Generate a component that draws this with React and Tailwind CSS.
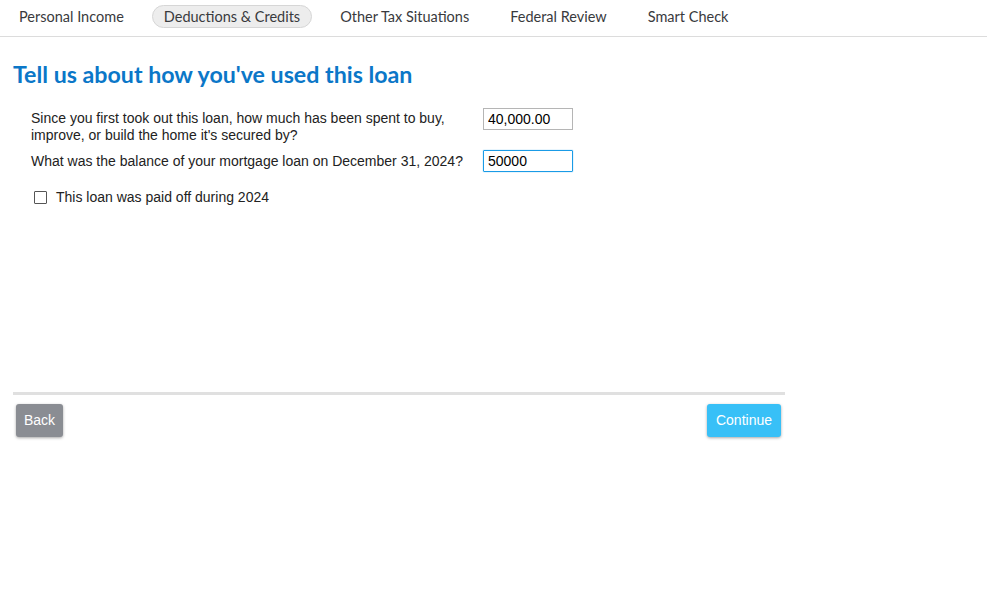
import { useState } from 'react';

const tabs = ['Personal Income', 'Deductions & Credits', 'Other Tax Situations', 'Federal Review', 'Smart Check'];

const App = () => {
  const [spent, setSpent] = useState('40,000.00');
  const [balance, setBalance] = useState('50000');
  const [paidOff, setPaidOff] = useState(false);

  return (
    <div className="w-[987px] h-[614px] bg-white" style={{ fontFamily: '"Liberation Sans", Arial, sans-serif' }}>
      {/* Top nav */}
      <div className="h-[37px] border-b border-[#dcdcdc] flex items-center gap-[15px] pl-[6px] pb-[3px] text-[14.5px] text-[#393a3d]" style={{ fontFamily: 'Lato, "Noto Sans", sans-serif' }}>
        {tabs.map((tab, i) => (
          <span
            key={tab}
            className={
              i === 1
                ? 'h-[23px] px-[11px] flex items-center rounded-full bg-[#ededed] border border-[#d6d6d6]'
                : 'px-[13px] flex items-center'
            }
          >
            {tab}
          </span>
        ))}
      </div>

      <div className="w-[772px] ml-[13px]">
        <h1 className="mt-[23px] text-[23.2px] leading-[29px] font-bold text-[#0b77c8]" style={{ fontFamily: 'Lato, "Noto Sans", sans-serif' }}>
          Tell us about how you've used this loan
        </h1>

        {/* Questions */}
        <div className="mt-[19px] pl-[18px] text-[14px] text-[#222] leading-[17px]">
          <div className="flex items-start">
            <p className="w-[452px] pt-[2px]">
              Since you first took out this loan, how much has been spent to buy, improve, or build the home it's secured by?
            </p>
            <input
              value={spent}
              onChange={(e) => setSpent(e.target.value)}
              className="w-[90px] h-[22px] border border-[#b5b5b5] px-[4px] text-[14px] text-black outline-none"
            />
          </div>
          <div className="flex items-center mt-[6px]">
            <p className="w-[452px]">What was the balance of your mortgage loan on December 31, 2024?</p>
            <input
              value={balance}
              onChange={(e) => setBalance(e.target.value)}
              className="w-[90px] h-[22px] border border-[#1a9be6] rounded-[1px] px-[4px] text-[14px] text-black outline-none shadow-[0_0_1px_#1a9be6]"
            />
          </div>

          <label className="flex items-center gap-[9px] mt-[17px] ml-[3px] cursor-pointer">
            <input
              type="checkbox"
              checked={paidOff}
              onChange={(e) => setPaidOff(e.target.checked)}
              className="w-[13px] h-[13px] appearance-none border border-[#555] bg-white rounded-[1px]"
            />
            <span>This loan was paid off during 2024</span>
          </label>
        </div>

        {/* Footer */}
        <div className="mt-[186px] border-t-[3px] border-[#e0e0e0] pt-[9px] flex justify-between">
          <button className="ml-[3px] h-[33px] px-[8px] rounded-[3px] bg-[#8a8d93] text-white text-[14px] shadow-[0_1px_3px_rgba(0,0,0,0.35)]">
            Back
          </button>
          <button className="mr-[4px] h-[33px] px-[9px] rounded-[3px] bg-[#38c0f7] text-white text-[14px] shadow-[0_1px_3px_rgba(0,0,0,0.35)]">
            Continue
          </button>
        </div>
      </div>
    </div>
  );
};

export default App;
